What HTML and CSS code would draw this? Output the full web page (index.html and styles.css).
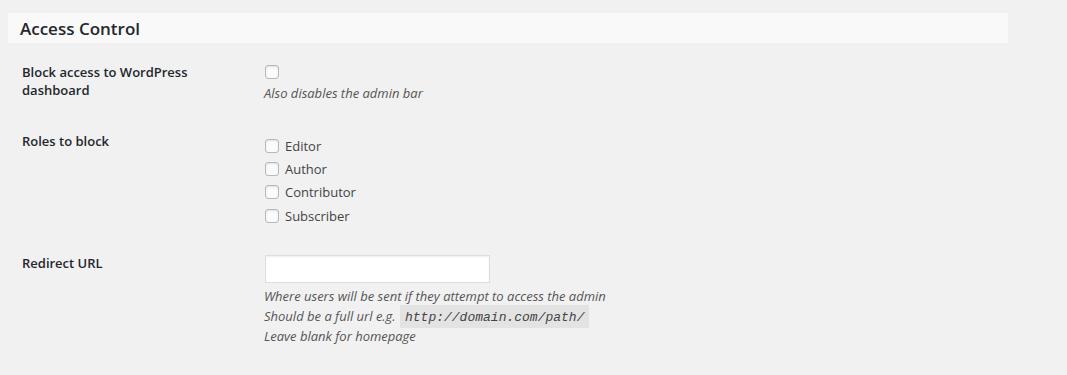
FILE: index.html
```html
<!DOCTYPE html>
<html>
<head>
    <meta charset="UTF-8">
    <title>Access Control</title>
    <link rel="stylesheet" href="styles.css">
</head>
<body>
    <div class="wrap">
        <!-- Section header -->
        <div class="section-head">
            <h3>Access Control</h3>
        </div>

        <div class="form-table">
            <div class="form-row row-dashboard">
                <div class="form-label">Block access to WordPress dashboard</div>
                <div class="form-field">
                    <span class="check"></span>
                    <p class="description">Also disables the admin bar</p>
                </div>
            </div>

            <div class="form-row row-roles">
                <div class="form-label">Roles to block</div>
                <div class="form-field role-list">
                    <label class="role"><span class="check"></span>Editor</label>
                    <label class="role"><span class="check"></span>Author</label>
                    <label class="role"><span class="check"></span>Contributor</label>
                    <label class="role"><span class="check"></span>Subscriber</label>
                </div>
            </div>

            <div class="form-row row-redirect">
                <div class="form-label">Redirect URL</div>
                <div class="form-field">
                    <div class="text-input"></div>
                    <p class="description">
                        <span class="line">Where users will be sent if they attempt to access the admin</span>
                        <span class="line">Should be a full url e.g. <code>http://domain.com/path/</code></span>
                        <span class="line">Leave blank for homepage</span>
                    </p>
                </div>
            </div>
        </div>
    </div>
</body>
</html>
```

FILE: styles.css
```css
body {
    margin: 0;
    padding: 0;
    background-color: #f1f1f1;
    color: #444;
    font-family: "Open Sans", sans-serif;
    font-size: 13px;
}
.wrap {
    padding: 13px 0 0 8px;
    width: 1000px;
}
.section-head {
    background-color: #f9f9f9;
    height: 30px;
    display: flex;
    align-items: center;
    padding: 0 12px;
}
.section-head h3 {
    margin: 0;
    font-size: 17px;
    font-weight: 600;
    color: #23282d;
}
.form-table {
    padding-left: 14px;
}
.form-row {
    display: flex;
}
.form-label {
    width: 200px;
    flex: none;
    font-weight: 600;
    color: #23282d;
    line-height: 18px;
    padding-right: 41px;
    font-size: 13px;
}
.form-field {
    display: flex;
    flex-direction: column;
    align-items: flex-start;
}
.check {
    display: inline-block;
    width: 12px;
    height: 12px;
    border: 1px solid #b4b9be;
    border-radius: 3px;
    background-color: #fbfbfb;
    box-shadow: inset 0 1px 2px rgba(0, 0, 0, 0.1);
    flex: none;
}
.description {
    margin: 0 0 0 1px;
    font-style: italic;
    color: #555;
    line-height: 20px;
}
.description .line {
    display: block;
    height: 20px;
    white-space: nowrap;
}
.row-dashboard {
    margin-top: 20px;
}
.row-dashboard .check {
    margin: 2px 0 0 2px;
}
.row-dashboard .description {
    margin-top: 4px;
}
.row-roles {
    margin-top: 29px;
}
.role-list {
    margin-top: 2px;
}
.role {
    display: flex;
    align-items: center;
    height: 23.3px;
    color: #444;
}
.role .check {
    margin: 0 6px 0 2px;
}
.row-redirect {
    margin-top: 27px;
}
.text-input {
    width: 223px;
    height: 26px;
    margin: 1px 0 0 2px;
    background-color: #fff;
    border: 1px solid #ddd;
    box-shadow: inset 0 1px 2px rgba(0, 0, 0, 0.07);
}
.row-redirect .description {
    margin-top: 3px;
}
code {
    font-family: "Liberation Mono", monospace;
    font-size: 13px;
    font-style: italic;
    line-height: 18px;
    background-color: #e3e3e3;
    padding: 5px 5px 3px;
    margin-left: 1px;
    color: #444;
}
```
